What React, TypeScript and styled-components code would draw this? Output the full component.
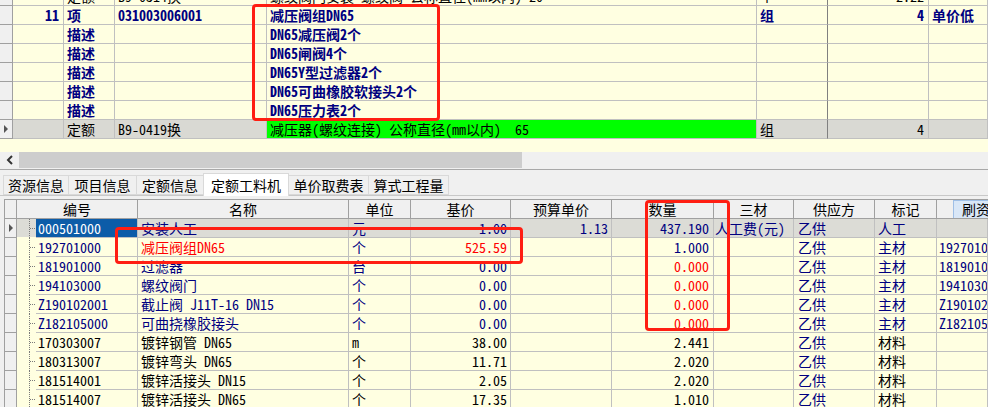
import React from 'react';
import styled, { createGlobalStyle } from 'styled-components';

const FONT = `"Noto Sans Mono CJK SC", "Noto Sans CJK SC", "Liberation Mono", monospace`;

const Global = createGlobalStyle`
  html, body { margin: 0; padding: 0; background: #f0f0f0; }
  body { font-family: ${FONT}; font-size: 14px; color: #000; }
  * { box-sizing: border-box; }
`;

const NAVY = '#000080';
const RED = '#ff0000';
const YELLOW = '#ffffe1';
const LINE = '#c0c0c0';

const Screen = styled.div`
  position: relative;
  width: 988px;
  height: 407px;
  overflow: hidden;
  background: #f0f0f0;
  display: flex;
  flex-direction: column;
`;

/* ---------- top grid ---------- */
const TopGrid = styled.div`
  flex: none;
  height: 152px;
  background: ${YELLOW};
  overflow: hidden;
`;

const TopRow = styled.div<{ $bold?: boolean; $color?: string; $bg?: string; $shift?: number }>`
  display: grid;
  grid-template-columns: 13px 51px 51px 152px 490px 71px 101px 59px;
  height: 19px;
  margin-top: ${p => (p.$shift ? `${p.$shift}px` : '0')};
  background: ${p => p.$bg || YELLOW};
  color: ${p => p.$color || '#000'};
  font-weight: ${p => (p.$bold ? 700 : 400)};
`;

const Cell = styled.div<{ $right?: boolean; $bg?: string; $color?: string; $edge?: string; $pad?: number }>`
  height: 19px;
  line-height: 18px;
  padding: 0 ${p => p.$pad ?? 3}px;
  border-right: 1px solid ${p => p.$edge || LINE};
  border-bottom: 1px solid ${LINE};
  white-space: pre;
  overflow: hidden;
  text-align: ${p => (p.$right ? 'right' : 'left')};
  background: ${p => p.$bg || 'transparent'};
  color: ${p => p.$color || 'inherit'};
`;

const Indicator = styled.div`
  height: 19px;
  background: #f0f0f0;
  border-right: 1px solid #a0a0a0;
  border-bottom: 1px solid #a0a0a0;
  display: flex;
  align-items: center;
  justify-content: center;
`;

const Arrow = () => (
  <svg width="6" height="10" viewBox="0 0 6 10">
    <path d="M1 1 L5 5 L1 9 Z" fill="#555" />
  </svg>
);

/* ---------- scrollbar ---------- */
const HScroll = styled.div`
  flex: none;
  height: 18px;
  display: flex;
  border-bottom: 1px solid #a8a8a8;
  padding-bottom: 1px;
`;
const ScrollBtn = styled.div`
  width: 19px;
  display: flex;
  align-items: center;
  justify-content: center;
  background: #f0f0f0;
`;
const ScrollThumb = styled.div`
  width: 503px;
  background: #cdcdcd;
`;
const ScrollTrack = styled.div`
  flex: 1;
  background: #f0f0f0;
`;

/* ---------- tabs ---------- */
const TabStrip = styled.div`
  flex: none;
  height: 26px;
  display: flex;
  align-items: flex-end;
  padding-left: 3px;
  border-bottom: 1px solid #c8c8c8;
`;
const Tab = styled.div<{ $active?: boolean; $w: number }>`
  width: ${p => p.$w}px;
  height: ${p => (p.$active ? 23 : 20)}px;
  margin-bottom: ${p => (p.$active ? -1 : 0)}px;
  background: ${p => (p.$active ? '#ffffff' : '#f0f0f0')};
  border: 1px solid #d9d9d9;
  border-bottom: ${p => (p.$active ? 'none' : '1px solid #d9d9d9')};
  margin-right: -1px;
  display: flex;
  align-items: center;
  justify-content: center;
  line-height: 18px;
  padding-top: ${p => (p.$active ? 0 : 0)}px;
  white-space: nowrap;
`;

/* ---------- bottom grid ---------- */
const BottomFrame = styled.div`
  flex: 1;
  margin: 3px 0 0 4px;
  border-top: 1px solid #a0a0a0;
  border-left: 1px solid #a0a0a0;
  background: ${YELLOW};
  overflow: hidden;
`;

const HeadRow = styled.div`
  display: grid;
  grid-template-columns: 12px 121px 211px 62px 100px 101px 102px 80px 81px 62px 51px;
  height: 19px;
  background: #f0f0f0;
`;
const HeadCell = styled.div`
  height: 19px;
  line-height: 18px;
  text-align: center;
  border-right: 1px solid #a0a0a0;
  border-bottom: 1px solid #a0a0a0;
  white-space: nowrap;
  overflow: hidden;
`;
const HeadTail = styled.div`
  height: 19px;
  padding-left: 16px;
  border-bottom: 1px solid #a0a0a0;
  overflow: hidden;
`;
const RefreshBtn = styled.div`
  height: 18px;
  line-height: 17px;
  padding-left: 8px;
  background: #d9e7f7;
  border-left: 1px solid #9fbfe6;
  border-top: 1px solid #9fbfe6;
  white-space: nowrap;
`;

const BodyRow = styled.div<{ $color: string; $bg?: string }>`
  display: grid;
  grid-template-columns: 12px 19px 102px 211px 62px 100px 101px 102px 80px 81px 62px 51px;
  height: 19px;
  color: ${p => p.$color};
  background: ${p => p.$bg || YELLOW};
`;

const TreeCell = styled.div`
  height: 19px;
  border-bottom: 1px solid ${YELLOW};
`;
const TreeLines = () => (
  <svg width="19" height="19" viewBox="0 0 19 19">
    <line x1="12.5" y1="0" x2="12.5" y2="19" stroke="#7a7a7a" strokeDasharray="1 1" />
    <line x1="13" y1="9.5" x2="19" y2="9.5" stroke="#7a7a7a" strokeDasharray="1 1" />
  </svg>
);

/* ---------- annotation ---------- */
const Mark = styled.div`
  position: absolute;
  border: 3px solid #ff1e12;
  border-radius: 4px;
  pointer-events: none;
`;

/* ---------- data ---------- */
const descRows = [
  'DN65减压阀2个',
  'DN65闸阀4个',
  'DN65Y型过滤器2个',
  'DN65可曲橡胶软接头2个',
  'DN65压力表2个',
];

type Res = {
  code: string;
  name: string;
  unit: string;
  base: string;
  budget?: string;
  qty: string;
  sancai?: string;
  mark: string;
  last?: string;
  hot?: boolean;
  zeroQty?: boolean;
  navy?: boolean;
  selected?: boolean;
};

const resources: Res[] = [
  { code: '000501000', name: '安装人工', unit: '元', base: '1.00', budget: '1.13', qty: '437.190', sancai: '人工费(元)', mark: '人工', navy: true, selected: true },
  { code: '192701000', name: '减压阀组DN65', unit: '个', base: '525.59', qty: '1.000', mark: '主材', last: '192701000', hot: true, navy: true },
  { code: '181901000', name: '过滤器', unit: '台', base: '0.00', qty: '0.000', mark: '主材', last: '181901000', zeroQty: true, navy: true },
  { code: '194103000', name: '螺纹阀门', unit: '个', base: '0.00', qty: '0.000', mark: '主材', last: '194103000', zeroQty: true, navy: true },
  { code: 'Z190102001', name: '截止阀 J11T-16 DN15', unit: '个', base: '0.00', qty: '0.000', mark: '主材', last: 'Z190102001', zeroQty: true, navy: true },
  { code: 'Z182105000', name: '可曲挠橡胶接头', unit: '个', base: '0.00', qty: '0.000', mark: '主材', last: 'Z182105000', zeroQty: true, navy: true },
  { code: '170303007', name: '镀锌钢管 DN65', unit: 'm', base: '38.00', qty: '2.441', mark: '材料' },
  { code: '180313007', name: '镀锌弯头 DN65', unit: '个', base: '11.71', qty: '2.020', mark: '材料' },
  { code: '181514001', name: '镀锌活接头 DN15', unit: '个', base: '2.05', qty: '2.020', mark: '材料' },
  { code: '181514007', name: '镀锌活接头 DN65', unit: '个', base: '17.35', qty: '1.010', mark: '材料' },
];

const tabs: [string, number][] = [
  ['资源信息', 66],
  ['项目信息', 69],
  ['定额信息', 68],
  ['定额工料机', 86],
  ['单价取费表', 81],
  ['算式工程量', 81],
];

const heads = ['编号', '名称', '单位', '基价', '预算单价', '数量', '三材', '供应方', '标记'];

export default function App() {
  return (
    <>
      <Global />
      <Screen>
        <TopGrid>
          <TopRow $shift={-13}>
            <Indicator />
            <Cell />
            <Cell>定额</Cell>
            <Cell>B9-0314换</Cell>
            <Cell>螺纹阀门安装 螺纹阀 公称直径(mm以内) 20</Cell>
            <Cell $edge="#808080">个</Cell>
            <Cell $right $pad={4}>2.22</Cell>
            <Cell />
          </TopRow>
          <TopRow $bold $color={NAVY}>
            <Indicator />
            <Cell $right $pad={4}>11</Cell>
            <Cell>项</Cell>
            <Cell>031003006001</Cell>
            <Cell>减压阀组DN65</Cell>
            <Cell $edge="#808080">组</Cell>
            <Cell $right $pad={4}>4</Cell>
            <Cell>单价低</Cell>
          </TopRow>
          {descRows.map(d => (
            <TopRow key={d} $bold $color={NAVY}>
              <Indicator />
              <Cell />
              <Cell>描述</Cell>
              <Cell />
              <Cell>{d}</Cell>
              <Cell $edge="#808080" />
              <Cell />
              <Cell />
            </TopRow>
          ))}
          <TopRow $bg="#d9d9d3">
            <Indicator>
              <Arrow />
            </Indicator>
            <Cell />
            <Cell>定额</Cell>
            <Cell>B9-0419换</Cell>
            <Cell $bg="#00ff00">减压器(螺纹连接) 公称直径(mm以内)  65</Cell>
            <Cell $edge="#808080">组</Cell>
            <Cell $right $pad={4}>4</Cell>
            <Cell />
          </TopRow>
        </TopGrid>

        <HScroll>
          <ScrollBtn>
            <svg width="8" height="10" viewBox="0 0 8 10">
              <path d="M6 1 L2 5 L6 9" fill="none" stroke="#333" strokeWidth="2" />
            </svg>
          </ScrollBtn>
          <ScrollThumb />
          <ScrollTrack />
        </HScroll>

        <TabStrip>
          {tabs.map(([t, w]) => (
            <Tab key={t} $w={w} $active={t === '定额工料机'}>
              {t}
            </Tab>
          ))}
        </TabStrip>

        <BottomFrame>
          <HeadRow>
            <HeadCell />
            {heads.map(h => (
              <HeadCell key={h}>{h}</HeadCell>
            ))}
            <HeadTail>
              <RefreshBtn>刷资源</RefreshBtn>
            </HeadTail>
          </HeadRow>
          {resources.map(r => (
            <BodyRow key={r.code} $color={r.navy ? NAVY : '#000'} $bg={r.selected ? '#dcdcd6' : undefined}>
              <Indicator>{r.selected ? <Arrow /> : null}</Indicator>
              <TreeCell>
                <TreeLines />
              </TreeCell>
              <Cell $pad={2} $bg={r.selected ? '#0c5ca8' : undefined} $color={r.selected ? '#ffffff' : undefined}>
                {r.code}
              </Cell>
              <Cell $color={r.hot ? RED : undefined}>{r.name}</Cell>
              <Cell>{r.unit}</Cell>
              <Cell $right $color={r.hot ? RED : undefined}>{r.base}</Cell>
              <Cell $right>{r.budget ?? ''}</Cell>
              <Cell $right $pad={4} $color={r.zeroQty ? RED : undefined}>{r.qty}</Cell>
              <Cell $pad={1}>{r.sancai ?? ''}</Cell>
              <Cell $pad={4} $color={NAVY}>乙供</Cell>
              <Cell>{r.mark}</Cell>
              <Cell $pad={2}>{r.last ?? ''}</Cell>
            </BodyRow>
          ))}
        </BottomFrame>

        <Mark style={{ left: 252, top: 4, width: 188, height: 117 }} />
        <Mark style={{ left: 115, top: 227, width: 408, height: 37 }} />
        <Mark style={{ left: 645, top: 200, width: 85, height: 131 }} />
      </Screen>
    </>
  );
}
